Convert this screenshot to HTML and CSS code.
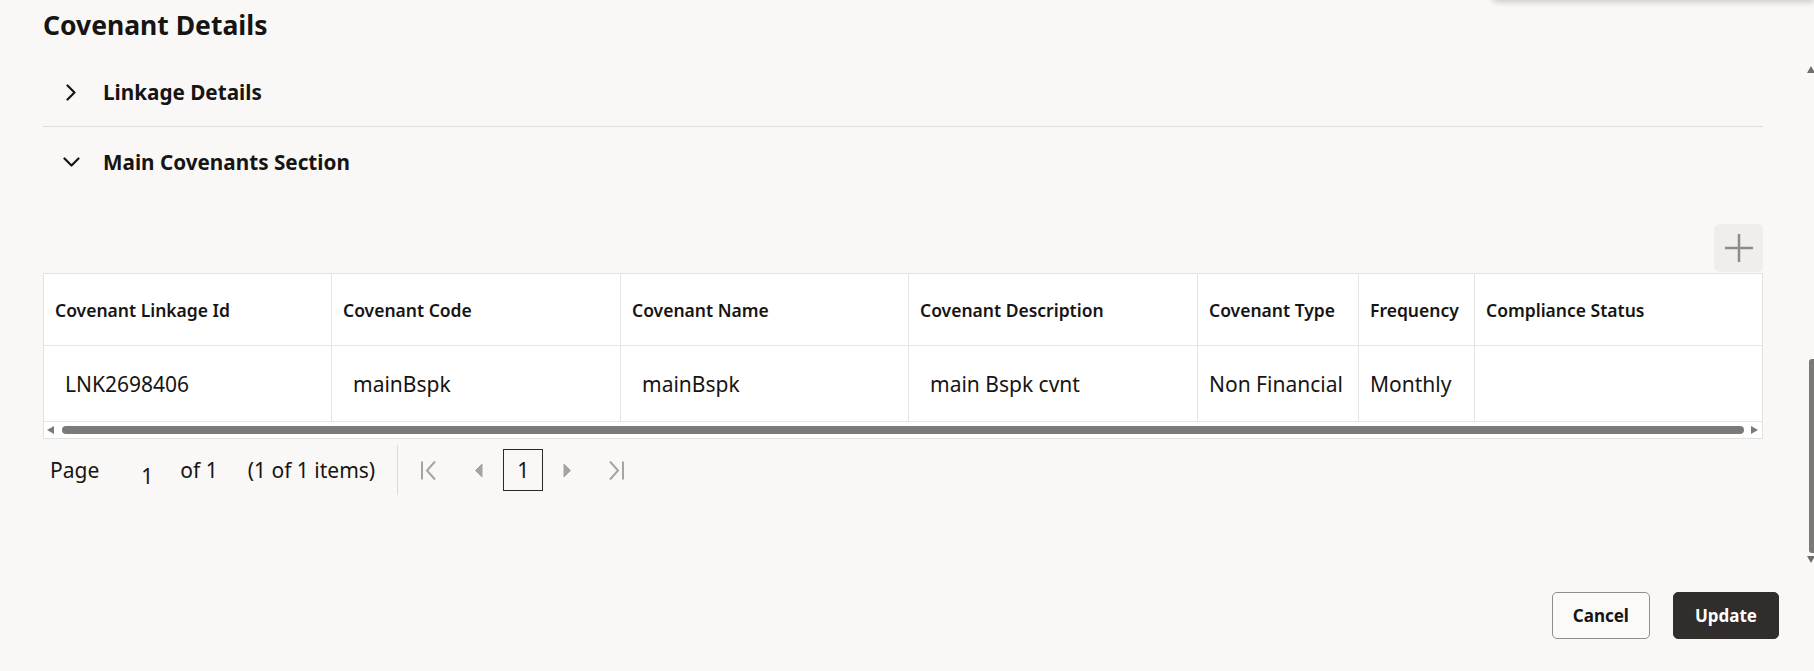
FILE: index.html
```html
<!DOCTYPE html>
<html lang="en">
<head>
    <meta charset="UTF-8">
    <meta name="viewport" content="width=device-width, initial-scale=1.0">
    <title>Covenant Details</title>
    <link rel="stylesheet" href="styles.css">
</head>
<body>
    <!-- bottom edge of the header popup that overlaps the dialog -->
    <div class="top-shade"></div>

    <!-- dialog scrollbar -->
    <div class="vscroll">
        <span class="vs-up"></span>
        <span class="vs-thumb"></span>
        <span class="vs-down"></span>
    </div>

    <main class="dialog">
        <div class="content">
            <h1 class="title">Covenant Details</h1>

            <div class="section section-closed">
                <span class="chevron">
                    <svg width="10" height="17" viewBox="0 0 10 17"><path d="M1.5 1.5 L8.5 8.5 L1.5 15.5" fill="none" stroke="#161513" stroke-width="2.2" stroke-linecap="round" stroke-linejoin="round"/></svg>
                </span>
                <h2>Linkage Details</h2>
            </div>

            <div class="section section-open">
                <span class="chevron">
                    <svg width="17" height="10" viewBox="0 0 17 10"><path d="M1.5 1.5 L8.5 8.5 L15.5 1.5" fill="none" stroke="#161513" stroke-width="2.2" stroke-linecap="round" stroke-linejoin="round"/></svg>
                </span>
                <h2>Main Covenants Section</h2>
            </div>

            <div class="toolbar">
                <button class="add-btn" type="button" title="Add">
                    <svg width="28" height="28" viewBox="0 0 28 28"><path d="M14 0 V28 M0 14 H28" stroke="#8d8c8a" stroke-width="2.5"/></svg>
                </button>
            </div>

            <div class="grid-wrap">
                <table class="grid">
                    <colgroup>
                        <col style="width: 288px">
                        <col style="width: 289px">
                        <col style="width: 288px">
                        <col style="width: 289px">
                        <col style="width: 161px">
                        <col style="width: 116px">
                        <col>
                    </colgroup>
                    <thead>
                        <tr>
                            <th>Covenant Linkage Id</th>
                            <th>Covenant Code</th>
                            <th>Covenant Name</th>
                            <th>Covenant Description</th>
                            <th>Covenant Type</th>
                            <th>Frequency</th>
                            <th>Compliance Status</th>
                        </tr>
                    </thead>
                    <tbody>
                        <tr>
                            <td class="field">LNK2698406</td>
                            <td class="field">mainBspk</td>
                            <td class="field">mainBspk</td>
                            <td class="field">main Bspk cvnt</td>
                            <td>Non Financial</td>
                            <td>Monthly</td>
                            <td></td>
                        </tr>
                    </tbody>
                </table>
                <div class="hscroll">
                    <span class="hs-left"></span>
                    <span class="hs-thumb"></span>
                    <span class="hs-right"></span>
                </div>
            </div>

            <div class="pager">
                <span>Page</span>
                <span class="pg-input">1</span>
                <span class="pg-of">of 1</span>
                <span class="pg-count">(1 of 1 items)</span>
                <span class="pg-sep"></span>
                <span class="pg-icon pg-first">
                    <svg width="18" height="21" viewBox="0 0 18 21"><path d="M2 1.5 V19.5 M15 1.5 L7 10.5 L15 19.5" fill="none" stroke="#a5a4a2" stroke-width="2"/></svg>
                </span>
                <span class="pg-icon pg-prev">
                    <svg width="9" height="15" viewBox="0 0 9 15"><path d="M8 1 V14 L1.5 7.5 Z" fill="#a5a4a2" stroke="#a5a4a2" stroke-width="1" stroke-linejoin="round"/></svg>
                </span>
                <span class="pg-current">1</span>
                <span class="pg-icon pg-next">
                    <svg width="9" height="15" viewBox="0 0 9 15"><path d="M1 1 V14 L7.5 7.5 Z" fill="#a5a4a2" stroke="#a5a4a2" stroke-width="1" stroke-linejoin="round"/></svg>
                </span>
                <span class="pg-icon pg-last">
                    <svg width="18" height="21" viewBox="0 0 18 21"><path d="M16 1.5 V19.5 M3 1.5 L11 10.5 L3 19.5" fill="none" stroke="#a5a4a2" stroke-width="2"/></svg>
                </span>
            </div>
        </div>

        <footer class="actions">
            <button class="btn btn-outline" type="button">Cancel</button>
            <button class="btn btn-solid" type="button">Update</button>
        </footer>
    </main>
</body>
</html>
```

FILE: styles.css
```css
* {
    box-sizing: border-box;
}
html, body {
    margin: 0;
    height: 100%;
}
body {
    font-family: "Noto Sans", "Open Sans", sans-serif;
    color: #161513;
    background-color: #f9f8f6;
    overflow: hidden;
    position: relative;
}

/* overlays */
.top-shade {
    position: absolute;
    top: -20px;
    left: 1492px;
    right: 0;
    height: 20px;
    background-color: #fff;
    border-radius: 0 0 0 6px;
    box-shadow: 0 2px 6px rgba(0, 0, 0, 0.2);
}
.vscroll {
    position: absolute;
    top: 0;
    right: 0;
    width: 8px;
    height: 100%;
}
.vs-up,
.vs-down,
.vs-thumb {
    position: absolute;
    right: -1px;
}
.vs-up {
    top: 66px;
    border-left: 4px solid transparent;
    border-right: 4px solid transparent;
    border-bottom: 7px solid #6f6e6c;
}
.vs-down {
    top: 556px;
    border-left: 4px solid transparent;
    border-right: 4px solid transparent;
    border-top: 7px solid #6f6e6c;
}
.vs-thumb {
    right: 0;
    top: 359px;
    width: 5px;
    height: 194px;
    background-color: #7a7978;
    border-radius: 3px 0 0 3px;
}

/* layout */
.dialog {
    height: 100vh;
    display: flex;
    flex-direction: column;
    justify-content: space-between;
}
.content {
    padding: 0 51px 0 43px;
}
.title {
    margin: 0 0 16px;
    padding-top: 9px;
    font-size: 26.5px;
    line-height: 33px;
    font-weight: 700;
}

/* collapsible sections */
.section {
    display: flex;
    align-items: center;
    height: 69px;
}
.section h2 {
    margin: 0;
    font-size: 20.7px;
    font-weight: 700;
}
.section-closed {
    border-bottom: 1px solid #dfdedb;
}
.section-open {
    height: 70px;
}
.chevron {
    width: 24px;
    margin: 0 20px 0 16px;
    display: flex;
    justify-content: center;
    align-items: center;
}

/* table toolbar */
.toolbar {
    margin-top: 27px;
    margin-bottom: 1px;
    display: flex;
    justify-content: flex-end;
}
.add-btn {
    width: 49px;
    height: 48px;
    padding: 0;
    border: none;
    border-radius: 6px;
    background-color: #efeeec;
    display: flex;
    justify-content: center;
    align-items: center;
}

/* table */
.grid-wrap {
    border: 1px solid #e2e1df;
    background-color: #fff;
}
.grid {
    width: 100%;
    table-layout: fixed;
    border-spacing: 0;
}
.grid th,
.grid td {
    padding: 0 11px;
    text-align: left;
    vertical-align: middle;
    white-space: nowrap;
    overflow: hidden;
    border-right: 1px solid #e6e5e3;
    border-bottom: 1px solid #e6e5e3;
}
.grid th:last-child,
.grid td:last-child {
    border-right: none;
}
.grid th {
    height: 72px;
    font-size: 17.5px;
    font-weight: 600;
}
.grid td {
    height: 76px;
    font-size: 21px;
    font-weight: 400;
}
.grid td.field {
    padding-left: 21px;
}
.hscroll {
    height: 16px;
    display: flex;
    align-items: center;
    padding: 0 4px 0 3px;
}
.hs-left {
    border-top: 4px solid transparent;
    border-bottom: 4px solid transparent;
    border-right: 7px solid #7b7a79;
}
.hs-right {
    border-top: 4px solid transparent;
    border-bottom: 4px solid transparent;
    border-left: 7px solid #7b7a79;
}
.hs-thumb {
    flex: 1;
    height: 8px;
    margin: 0 7px 0 8px;
    border-radius: 4px;
    background-color: #7b7a79;
}

/* pagination */
.pager {
    display: flex;
    align-items: center;
    height: 50px;
    margin-top: 6px;
    padding-left: 7px;
    font-size: 21px;
}
.pg-input {
    margin-left: 42px;
    margin-top: 12px;
}
.pg-of {
    margin-left: 27px;
}
.pg-count {
    margin-left: 30px;
}
.pg-sep {
    margin-left: 22px;
    width: 1px;
    align-self: stretch;
    background-color: #dcdbd9;
}
.pg-icon {
    display: flex;
    align-items: center;
}
.pg-first {
    margin-left: 22px;
}
.pg-prev {
    margin-left: 36px;
}
.pg-current {
    margin-left: 20px;
    width: 40px;
    height: 42px;
    border: 1px solid #2b2a28;
    display: flex;
    justify-content: center;
    align-items: center;
}
.pg-next {
    margin-left: 20px;
}
.pg-last {
    margin-left: 35px;
}

/* dialog buttons */
.actions {
    display: flex;
    justify-content: flex-end;
    gap: 23px;
    padding: 0 35px 32px 0;
}
.btn {
    height: 47px;
    border-radius: 5px;
    font-family: "Noto Sans", "Open Sans", sans-serif;
    font-size: 17px;
    font-weight: 700;
    cursor: pointer;
}
.btn-outline {
    padding: 0 20px;
    border: 1px solid #8f8e8c;
    background-color: #fbfaf9;
    color: #161513;
}
.btn-outline:hover {
    background-color: #f1efed;
}
.btn-solid {
    padding: 0 21px;
    border: 1px solid #312d2a;
    background-color: #312d2a;
    color: #fff;
}
.btn-solid:hover {
    background-color: #201e1c;
}
```
